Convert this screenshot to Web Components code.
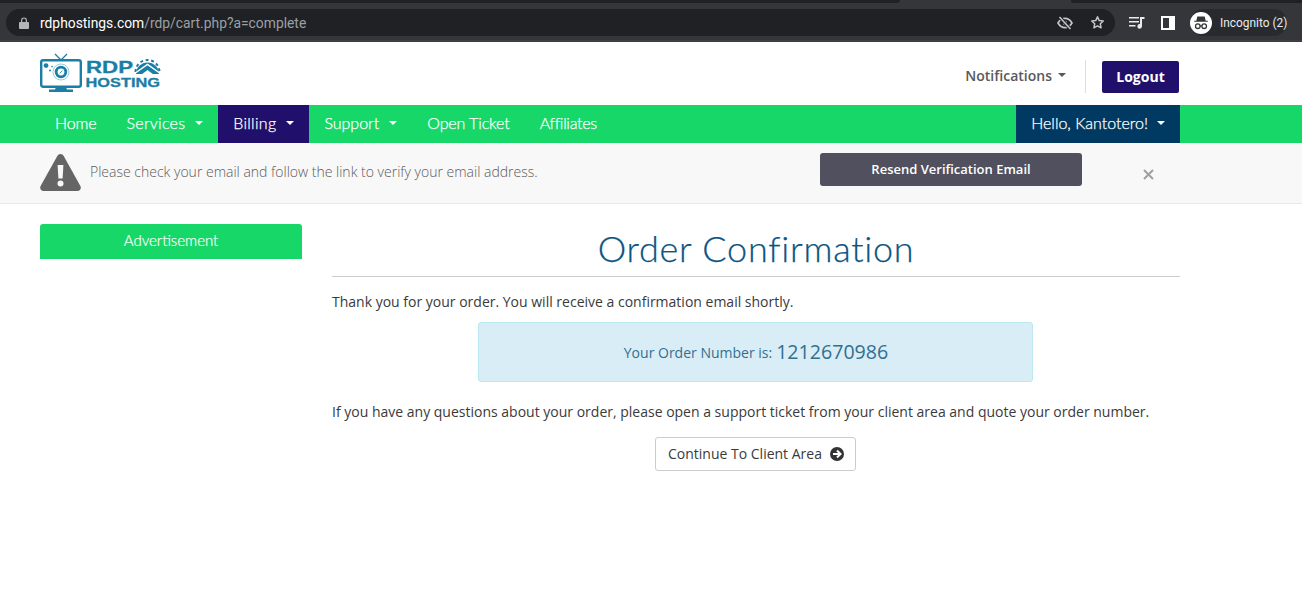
<!DOCTYPE html>
<html lang="en">
<head>
<meta charset="utf-8">
<title>Order Confirmation</title>
<style>
  html, body { margin: 0; padding: 0; background: #fff; }
  body { font-family: "Open Sans", sans-serif; font-size: 14px; color: #333; overflow: hidden; }
</style>
</head>
<body>
<browser-bar></browser-bar>
<site-header></site-header>
<main-nav></main-nav>
<verify-banner></verify-banner>
<page-body>
  <side-panel slot="side">Advertisement</side-panel>
  <order-confirmation slot="main"></order-confirmation>
</page-body>

<script>
class BrowserBar extends HTMLElement {
  constructor () {
    super()
    this.shadow = this.attachShadow({ mode: 'open' })
  }

  connectedCallback () {
    this.shadow.innerHTML = /* html */`
      <style>
        :host { display: block; position: relative; height: 42px; background: #35363a; box-sizing: border-box; padding: 9px 15px 0 6px; border-bottom: 2px solid #3e3f43; }
        .tab { position: absolute; top: 0; height: 3px; background: #202124; }
        .tab.left { left: 0; width: 900px; border-bottom-right-radius: 3px; }
        .tab.right { left: 1071px; right: 0; border-bottom-left-radius: 3px; }
        .row { display: flex; align-items: center; height: 27px; }
        .url { flex: 0 0 1109px; height: 27px; box-sizing: border-box; background: #202124; border-radius: 14px; display: flex; align-items: center; padding: 0 10px 0 13px; font: 13.85px "Roboto", sans-serif; color: #9aa0a6; }
        .lock { margin-right: 11px; }
        .host { color: #fff; }
        .spacer { flex: 1; }
        .url svg.eye { margin-right: 17px; }
        .tools { flex: 1; display: flex; align-items: center; padding-left: 14px; }
        .queue { margin-right: 16px; }
        .panel { margin-right: 15px; }
        .incog { flex: 1; height: 27px; display: flex; align-items: center; background: #292a2d; border-radius: 14px; color: #e8eaed; font: 11.9px "Roboto", sans-serif; gap: 8px; white-space: nowrap; }
      </style>
      <div class="tab left"></div>
      <div class="tab right"></div>
      <div class="row">
        <div class="url">
          <svg class="lock" width="10" height="12" viewBox="0 0 10 12"><path fill="#b3b5b8" d="M1 5h8a1 1 0 0 1 1 1v5a1 1 0 0 1-1 1H1a1 1 0 0 1-1-1V6a1 1 0 0 1 1-1zM2 5V3.400a3 3 0 0 1 6 0V5H6.800V3.400a1.800 1.800 0 0 0-3.600 0V5z"/></svg>
          <span class="host">rdphostings.com</span><span>/rdp/cart.php?a=complete</span>
          <span class="spacer"></span>
          <svg class="eye" width="16" height="14" viewBox="0 0 16 14"><path fill="none" stroke="#c4c7c5" stroke-width="1.600" d="M1 7c2-3.400 4.400-4.600 7-4.600S13 3.600 15 7c-2 3.400-4.400 4.600-7 4.600S3 10.400 1 7z"/><circle cx="8" cy="7" r="2.200" fill="#c4c7c5"/><path stroke="#202124" stroke-width="3.400" d="M2.500 1l11 12"/><path stroke="#c4c7c5" stroke-width="1.600" d="M2.500 1l11 12"/></svg>
          <svg width="15" height="15" viewBox="0 0 24 24"><path fill="none" stroke="#c4c7c5" stroke-width="2.400" stroke-linejoin="round" d="M12 3l2.800 5.900 6.400.8-4.700 4.400 1.200 6.400L12 17.400l-5.700 3.100 1.200-6.400L2.800 9.700l6.400-.8z"/></svg>
        </div>
        <div class="tools">
          <svg class="queue" width="16" height="13" viewBox="0 0 16 13"><path fill="#e8eaed" d="M0 1h10v1.600H0zM0 5h10v1.600H0zM0 9h6.500v1.600H0zM11 1h4.500v2H13v7.300a2.300 2.300 0 1 1-2-2.200z"/></svg>
          <svg class="panel" width="14" height="14" viewBox="0 0 14 14"><path fill="#fff" d="M0 0h14v14H0z"/><path fill="#35363a" d="M2 2h6v10H2z"/></svg>
          <div class="incog">
            <svg width="22" height="22" viewBox="0 0 22 22"><circle cx="11" cy="11" r="11" fill="#fff"/><path fill="#35363a" d="M7.300 4.500h7.400l1 4.200h2.100v1.100H4.200V8.700h2.100z"/><g fill="none" stroke="#35363a" stroke-width="1.300"><circle cx="7.800" cy="14.200" r="2.300"/><circle cx="14.200" cy="14.200" r="2.300"/><path d="M10 13.800h2"/></g></svg>
            <span>Incognito (2)</span>
          </div>
        </div>
      </div>
    `
  }
}

class SiteHeader extends HTMLElement {
  constructor () {
    super()
    this.shadow = this.attachShadow({ mode: 'open' })
  }

  connectedCallback () {
    this.shadow.innerHTML = /* html */`
      <style>
        :host { display: flex; align-items: center; height: 63px; box-sizing: border-box; padding: 1px 123px 0 40px; background: #fff; font-family: "Open Sans", sans-serif; }
        .logo { display: block; }
        .logo text { font-family: "Liberation Sans", sans-serif; font-weight: 700; fill: #1a7ea5; stroke: #1a7ea5; stroke-width: .3px; }
        .spacer { flex: 1; }
        .notify { margin-top: 2px; font-size: 14px; font-weight: 600; color: #58595b; display: flex; align-items: center; gap: 6px; }
        .caret { width: 0; height: 0; border: 4px solid transparent; border-top-color: #58595b; border-bottom: 0; }
        .divider { margin: 5px 16px 0 19px; width: 1px; height: 33px; background: #ddd; }
        .logout { margin-top: 6px; height: 32px; width: 77px; box-sizing: border-box; padding-bottom: 2px; display: flex; align-items: center; justify-content: center; background: #21106b; color: #fff; font-size: 14px; font-weight: 700; border-radius: 2px; }
      </style>
      <svg class="logo" width="122" height="42" viewBox="0 0 122 42">
        <g fill="none" stroke="#1a7ea5">
          <rect x="1.200" y="7.200" width="39.600" height="26.600" rx="2" stroke-width="2.400"/>
          <path stroke-width="1.300" d="M15 1l5.500 5.500M27 1l-5.500 5.500"/>
          <circle cx="21" cy="19" r="4.800" stroke-width="2.800"/>
          <circle cx="21" cy="19" r="8" stroke-width=".7" opacity=".6"/>
          <path stroke-width=".8" d="M19.500 20.500l3-3"/>
        </g>
        <g fill="#1a7ea5">
          <circle cx="6" cy="12.600" r="2.400"/><circle cx="10" cy="17.600" r="1"/><circle cx="12" cy="13.600" r=".8"/>
          <path d="M16 34h10l1 2.500h6V39H9v-2.500h6z"/>
        </g>
        <g fill="none">
          <path fill="#1a7ea5" d="M96 21a11.500 11.500 0 0 1 23 0z"/>
          <path stroke="#1a7ea5" stroke-width="2" stroke-dasharray="3 2.600" d="M95.500 19a12 12 0 0 1 24 0"/>
          <path stroke="#fff" stroke-width="1.500" d="M94 21l13.500-9.500L121 21"/>
          <path fill="#fff" d="M101.500 21.500l6-4.500 6 4.500z"/>
        </g>
        <text x="46" y="20" font-size="16.500" textLength="47" lengthAdjust="spacingAndGlyphs">RDP</text>
        <text x="45.500" y="34.300" font-size="13" textLength="74.500" lengthAdjust="spacingAndGlyphs">HOSTING</text>
      </svg>
      <span class="spacer"></span>
      <span class="notify">Notifications <span class="caret"></span></span>
      <span class="divider"></span>
      <span class="logout">Logout</span>
    `
  }
}

class MainNav extends HTMLElement {
  constructor () {
    super()
    this.shadow = this.attachShadow({ mode: 'open' })
  }

  connectedCallback () {
    const items = [
      { label: 'Home', spacing: -0.1 },
      { label: 'Services', spacing: 0.25, caret: true },
      { label: 'Billing', spacing: 0.3, caret: true, active: true },
      { label: 'Support', spacing: 0, caret: true },
      { label: 'Open Ticket', spacing: -0.1 },
      { label: 'Affiliates', spacing: -0.3 }
    ]
    this.shadow.innerHTML = /* html */`
      <style>
        :host { display: flex; height: 38px; padding: 0 122px 0 40px; background: #17d769; font: 300 16px "Lato", sans-serif; -webkit-text-stroke: .25px #fff; color: #fff; }
        a { display: flex; align-items: center; padding: 0 15px 4px; gap: 10px; white-space: nowrap; }
        .active { background: #21106b; }
        .spacer { flex: 1; }
        .user { background: #003a63; gap: 9px; }
        .caret { width: 0; height: 0; border: 4px solid transparent; border-top-color: #fff; border-bottom: 0; margin-top: 2px; }
      </style>
      ${items.map(item => `<a class="${item.active ? 'active' : ''}" style="letter-spacing:${item.spacing}px">${item.label}${item.caret ? '<span class="caret"></span>' : ''}</a>`).join('')}
      <span class="spacer"></span>
      <a class="user">Hello, Kantotero!<span class="caret"></span></a>
    `
  }
}

class VerifyBanner extends HTMLElement {
  constructor () {
    super()
    this.shadow = this.attachShadow({ mode: 'open' })
  }

  connectedCallback () {
    this.shadow.innerHTML = /* html */`
      <style>
        :host { display: flex; align-items: center; height: 61px; box-sizing: border-box; padding: 0 122px 2px 40px; background: #f8f8f8; border-bottom: 1px solid #e7e7e7; font-family: "Open Sans", sans-serif; }
        svg.warn { margin-right: 9px; }
        .msg { font-size: 14px; font-weight: 300; color: #5b5b5b; flex: 0 0 730px; padding-bottom: 2px; }
        .resend { width: 262px; height: 33px; margin-top: -5px; display: flex; align-items: center; justify-content: center; background: #50505f; color: #fff; font-size: 13px; font-weight: 600; border-radius: 3px; padding-bottom: 2px; box-sizing: border-box; }
        .close { margin-left: 61px; margin-top: 4px; }
      </style>
      <svg class="warn" width="41" height="37" viewBox="0 0 41 37"><path fill="#656565" d="M20.500 0c1.400 0 2.500.8 3.200 2l16.700 30c1.200 2.300-.3 5-3 5H3.600c-2.700 0-4.200-2.700-3-5L17.300 2c.7-1.200 1.800-2 3.200-2z"/><path fill="#f8f8f8" d="M17.600 11h5.800l-.8 13.500h-4.200z"/><circle cx="20.500" cy="29.500" r="3" fill="#f8f8f8"/></svg>
      <span class="msg">Please check your email and follow the link to verify your email address.</span>
      <span class="resend">Resend Verification Email</span>
      <svg class="close" width="11" height="11" viewBox="0 0 11 11"><path stroke="#a0a0a0" stroke-width="2" d="M1 1l9 9M10 1l-9 9"/></svg>
    `
  }
}

class PageBody extends HTMLElement {
  constructor () {
    super()
    this.shadow = this.attachShadow({ mode: 'open' })
  }

  connectedCallback () {
    this.shadow.innerHTML = /* html */`
      <style>
        :host { display: grid; grid-template-columns: 262px 848px; column-gap: 30px; padding: 20px 122px 0 40px; }
      </style>
      <slot name="side"></slot>
      <slot name="main"></slot>
    `
  }
}

class SidePanel extends HTMLElement {
  constructor () {
    super()
    this.shadow = this.attachShadow({ mode: 'open' })
  }

  connectedCallback () {
    this.shadow.innerHTML = /* html */`
      <style>
        :host { display: block; }
        .head { height: 35px; box-sizing: border-box; padding-bottom: 4px; display: flex; align-items: center; justify-content: center; background: #17d769; color: #fff; font: 300 15px "Lato", sans-serif; -webkit-text-stroke: .2px #fff; border-radius: 3px 3px 0 0; }
      </style>
      <div class="head"><slot></slot></div>
    `
  }
}

class OrderConfirmation extends HTMLElement {
  constructor () {
    super()
    this.shadow = this.attachShadow({ mode: 'open' })
  }

  connectedCallback () {
    this.shadow.innerHTML = /* html */`
      <style>
        :host { display: block; font: 14px/20px "Open Sans", sans-serif; color: #3a3a3a; }
        h1 { margin: 0; height: 52px; font: 300 36px/48px "Lato", sans-serif; letter-spacing: .75px; -webkit-text-stroke: .25px #0b5483; color: #0b5483; text-align: center; border-bottom: 1px solid #ccc; }
        p { margin: 0; }
        .thanks { margin-top: 15px; }
        .number { width: 555px; height: 60px; box-sizing: border-box; margin: 10px 0 0 146px; padding-left: 1px; display: flex; align-items: center; justify-content: center; gap: 4px; background: #d9edf7; border: 1px solid #bce8f1; border-radius: 3px; color: #31708f; }
        .number span { padding-top: 2px; }
        .number b { font-weight: 400; font-size: 19.6px; }
        .questions { margin-top: 20px; }
        .actions { margin: 15px 0 0 323px; }
        .continue { height: 34px; width: 201px; box-sizing: border-box; padding-left: 12px; display: flex; align-items: center; gap: 8px; background: #fff; border: 1px solid #ccc; border-radius: 3px; color: #3a3a3a; }
      </style>
      <h1>Order Confirmation</h1>
      <p class="thanks">Thank you for your order. You will receive a confirmation email shortly.</p>
      <div class="number"><span>Your Order Number is:</span> <b>1212670986</b></div>
      <p class="questions">If you have any questions about your order, please open a support ticket from your client area and quote your order number.</p>
      <div class="actions">
        <span class="continue">Continue To Client Area
          <svg width="14" height="14" viewBox="0 0 14 14"><circle cx="7" cy="7" r="7" fill="#333"/><path fill="none" stroke="#fff" stroke-width="2" d="M3 7h7M7 3.500L10.500 7 7 10.500"/></svg>
        </span>
      </div>
    `
  }
}

customElements.define('browser-bar', BrowserBar)
customElements.define('site-header', SiteHeader)
customElements.define('main-nav', MainNav)
customElements.define('verify-banner', VerifyBanner)
customElements.define('page-body', PageBody)
customElements.define('side-panel', SidePanel)
customElements.define('order-confirmation', OrderConfirmation)
</script>
</body>
</html>
